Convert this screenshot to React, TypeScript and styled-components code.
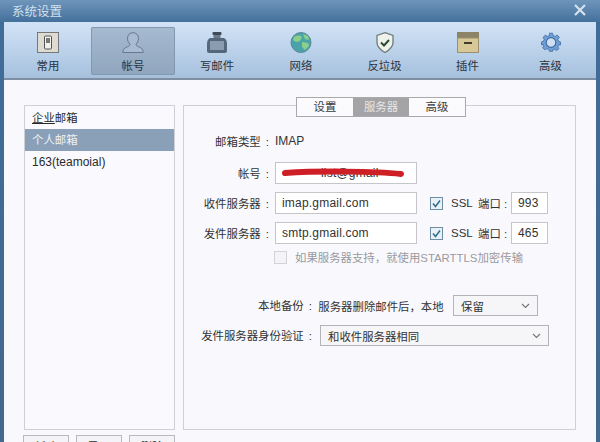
import React from "react";
import styled, { createGlobalStyle } from "styled-components";

const Global = createGlobalStyle`
  html, body { margin: 0; padding: 0; width: 600px; height: 442px; overflow: hidden; background: #4a7199; }
  * { box-sizing: border-box; }
  #root { width: 600px; height: 442px; }
`;

const font = `"Liberation Sans", "Noto Sans CJK SC", sans-serif`;

const Win = styled.div`
  width: 600px; height: 442px; overflow: hidden; display: flex; flex-direction: column;
  font-family: ${font}; color: #2e2e2e; font-size: 11.4px;
  background: linear-gradient(#6a91b8, #406c98 22px, #42698f);
  padding: 0 4px 0 4px;
`;
const TitleBar = styled.div`
  height: 22px; margin: 0 -4px; padding: 0 14px 2px 12px; display: flex; align-items: center; justify-content: space-between;
  background: linear-gradient(#6f95bb, #44709c);
  color: #d3e0ec; font-size: 12.5px; flex: none;
`;
const Close = styled.svg` width: 12px; height: 12px; display: block; `;
const Toolbar = styled.div`
  height: 58px; flex: none; display: flex; align-items: flex-start; padding: 5px 0 0 0;
  background: linear-gradient(#d2e3f6 0%, #bed4ec 45%, #a6c0dc 100%);
  border-bottom: 2px solid #7f8fa3;
`;
const Tool = styled.div<{ $w: number; $on?: boolean }>`
  width: ${p => p.$w}px; height: 48px; flex: none; display: flex; flex-direction: column; align-items: center;
  padding-top: 5px; gap: 6px; font-size: 11.4px; line-height: 14px; color: #2b3440; border-radius: 2px;
  background: ${p => (p.$on ? "linear-gradient(#a6bad0, #90a6be)" : "transparent")};
  box-shadow: ${p => (p.$on ? "inset 0 0 0 1px #8499b0" : "none")};
  svg { width: 22px; height: 21px; display: block; flex: none; }
`;
const Spacer = styled.div<{ $w: number }>` width: ${p => p.$w}px; flex: none; `;
const Body = styled.div`
  flex: 1; background: #f9f9fd; display: flex; gap: 8px; padding: 25px 20px 0 20px; min-height: 0;
`;
const Left = styled.div` width: 151px; flex: none; display: flex; flex-direction: column; gap: 5px; `;
const List = styled.div`
  height: 325px; flex: none; border: 1px solid #cfd0d6; padding-top: 1px; background: #fafafe;
`;
const Item = styled.div<{ $on?: boolean }>`
  height: 22px; line-height: 22px; padding-left: 7px; font-size: 11.4px;
  background: ${p => (p.$on ? "#8aa0b8" : "transparent")};
  color: ${p => (p.$on ? "#eef2f6" : "#2a2a2a")};
`;
const Latin = styled.span` font-size: 12px; `;
const Under = styled.span` text-decoration: underline; `;
const Buttons = styled.div` display: flex; gap: 7px; margin-left: -1px; `;
const Btn = styled.div`
  width: 47px; height: 24px; border: 1px solid #b9b9bd; background: #f4f4f6; text-align: center; line-height: 22px; font-size: 11.4px;
`;
const Panel = styled.div`
  width: 393px; height: 325px; flex: none; border: 1px solid #cfd0d6; background: #f9f9fd;
  display: flex; flex-direction: column;
`;
const Tabs = styled.div`
  display: flex; margin: -9px 0 0 112px; height: 20px; flex: none; width: 170px;
  border: 1px solid #a9a9ad; background: #fbfbfd;
`;
const Tab = styled.div<{ $on?: boolean }>`
  flex: 1; text-align: center; line-height: 18px; font-size: 11.4px;
  background: ${p => (p.$on ? "#a4a4a6" : "transparent")};
  color: ${p => (p.$on ? "#e6e6e8" : "#3a3a3a")};
`;
const Form = styled.div` display: flex; flex-direction: column; flex: 1; `;
const Row = styled.div<{ $h: number; $mt: number }>`
  height: ${p => p.$h}px; margin-top: ${p => p.$mt}px; display: flex; align-items: center; flex: none;
`;
const Label = styled.div<{ $w?: number }>`
  width: ${p => p.$w ?? 85}px; margin-right: ${p => (p.$w ? 0 : 6)}px; padding-bottom: 1px; flex: none;
  text-align: right; font-size: 11.4px; word-spacing: 2px; white-space: nowrap; color: #333;
`;
const Value = styled.div<{ $w?: number }>`
  width: ${p => (p.$w ? `${p.$w}px` : "auto")}; flex: none; font-size: 11.4px; color: #333; white-space: nowrap;
`;
const Imap = styled(Value)` font-size: 12px; `;
const Field = styled.div<{ $w: number; $pl?: number }>`
  position: relative;
  width: ${p => p.$w}px; height: 22px; flex: none; border: 1px solid #c6c6ca; background: #fff;
  padding-left: ${p => p.$pl ?? 6}px; line-height: 20px; font-size: 12px; color: #333; letter-spacing: 0.2px; white-space: nowrap;
`;
const Scribble = styled.svg`
  position: absolute; left: 6px; top: 4px; width: 122px; height: 12px;
`;
const Check = styled.svg<{ $ml: number }>`
  width: 13px; height: 13px; flex: none; display: block; margin-left: ${p => p.$ml}px;
`;
const Ssl = styled.div` margin-left: 8px; width: 27px; font-size: 11.5px; color: #333; `;
const Port = styled.div` width: 33px; font-size: 11.4px; color: #333; white-space: nowrap; `;
const Muted = styled.div` margin-left: 8px; font-size: 11.4px; color: #9a9aa0; white-space: nowrap; `;
const Select = styled.div<{ $w: number; $ml: number }>`
  width: ${p => p.$w}px; height: 21px; margin-left: ${p => p.$ml}px; flex: none;
  border: 1px solid #b4b4b8; background: #f6f6f8; display: flex; align-items: center; justify-content: space-between;
  padding: 0 7px 0 7px; font-size: 11.4px; color: #333;
  svg { width: 9px; height: 6px; display: block; flex: none; }
`;

const Chevron = () => (
  <svg viewBox="0 0 9 6"><path d="M1 1l3.5 3.5L8 1" fill="none" stroke="#777" strokeWidth="1.2" /></svg>
);
const CheckBox = ({ ml, on = true }: { ml: number; on?: boolean }) => (
  <Check $ml={ml} viewBox="0 0 13 13">
    <rect x=".5" y=".5" width="12" height="12" fill={on ? "#e8f1f6" : "#f4f4f6"} stroke={on ? "#6f8ea3" : "#d4d4d8"} />
    {on && <path d="M3 6.5l2.5 3L10 3.5" fill="none" stroke="#2f6f8f" strokeWidth="1.5" />}
  </Check>
);

const IconGeneral = () => (
  <svg viewBox="0 0 22 21">
    <rect x=".5" y=".5" width="21" height="20" fill="#dedcd2" stroke="#77777a" />
    <rect x="7.5" y="4" width="7" height="13" rx="1" fill="#f0efe8" stroke="#555" />
    <rect x="9" y="6" width="4" height="5" fill="#777" />
  </svg>
);
const IconUser = () => (
  <svg viewBox="0 0 22 21">
    <path d="M.8 20.500c0-3.500 2-4.800 4.700-5.800 1.500-.6 2.500-1.200 2.500-2.500-1.500-1.500-2.500-3.500-2.500-6C5.500 3 7.800.7 11 .7s5.500 2.300 5.500 5.500c0 2.500-1 4.500-2.500 6 0 1.300 1 1.900 2.500 2.500 2.700 1 4.700 2.300 4.700 5.800z" fill="#a9bbd0" stroke="#64788f" />
  </svg>
);
const IconStamp = () => (
  <svg viewBox="0 0 22 21">
    <rect x="6.500" y="0" width="9" height="3" rx="1" fill="#3e4a57" />
    <rect x="7.500" y="3" width="7" height="4" fill="#6e7a88" />
    <path d="M4 6h14c2 1 3 3 3 6v7a2 2 0 0 1-2 2H3a2 2 0 0 1-2-2v-7c0-3 1-5 3-6z" fill="#55677a" />
    <path d="M4 9h14v9H4z" fill="#8a9cb0" />
  </svg>
);
const IconGlobe = () => (
  <svg viewBox="0 0 22 21">
    <circle cx="11" cy="10.500" r="10" fill="#4aa3a8" stroke="#5a8a9a" />
    <path d="M4 5c3-2 6-2 8 0l-2 4-4 1-3-2zM12 10l6 1 1 3-4 4-3-3zM13 2l5 2 1 4-4-1z" fill="#8ccf8c" />
  </svg>
);
const IconShield = () => (
  <svg viewBox="0 0 22 21">
    <path d="M11 .7l8 2.800v7c0 5-4.500 8-8 10-3.500-2-8-5-8-10v-7z" fill="#eef1ec" stroke="#6f7b78" strokeWidth="1.3" />
    <path d="M7 10.500l3 3 5-5.500" fill="none" stroke="#2c4a32" strokeWidth="2" />
  </svg>
);
const IconBox = () => (
  <svg viewBox="0 0 22 21">
    <rect x="0" y="0" width="22" height="6" fill="#8d8468" />
    <rect x=".5" y="6" width="21" height="14.500" fill="#d8c898" stroke="#9a8f70" />
    <rect x="7" y="10" width="8" height="2" fill="#3f3a2c" />
  </svg>
);
const IconGear = () => (
  <svg viewBox="0 0 24 24">
    <path d="M10 1h4l.7 3 2.500 1 2.600-1.600 2.800 2.800L20.600 8.800l1 2.500 2.400.7v4l-2.400-.2-1 2.500 1.500 2.200-2.800 2.400-2.600-1.500-2.500 1L14 24h-4l-.7-2.500-2.500-1-2.600 1.500-2.800-2.400 1.500-2.200-1-2.500L0 16v-4l2.400-.7 1-2.500L2 6.200 4.800 3.400 7.400 5l2.500-1z" transform="translate(1.200 .5) scale(.9)" fill="#6f9fd8" stroke="#41699c" />
    <circle cx="12" cy="12" r="5.500" fill="#cfe0f2" stroke="#41699c" strokeWidth="1.300" />
  </svg>
);

export default function App() {
  return (
    <Win>
      <Global />
      <TitleBar>
        <span>系统设置</span>
        <Close viewBox="0 0 12 12"><path d="M1 1l10 10M11 1L1 11" stroke="#d5e2ee" strokeWidth="2.200" /></Close>
      </TitleBar>
      <Toolbar>
        <Spacer $w={5} />
        <Tool $w={78}><IconGeneral />常用</Tool>
        <Spacer $w={4} />
        <Tool $w={84} $on><IconUser />帐号</Tool>
        <Tool $w={84}><IconStamp />写邮件</Tool>
        <Tool $w={84}><IconGlobe />网络</Tool>
        <Tool $w={83}><IconShield />反垃圾</Tool>
        <Tool $w={83}><IconBox />插件</Tool>
        <Tool $w={83}><IconGear />高级</Tool>
      </Toolbar>
      <Body>
        <Left>
          <List>
            <Item><Under>企业</Under>邮箱</Item>
            <Item $on>个人邮箱</Item>
            <Item><Latin>163(teamoial)</Latin></Item>
          </List>
          <Buttons>
            <Btn>新建</Btn>
            <Btn>导入</Btn>
            <Btn>删除</Btn>
          </Buttons>
        </Left>
        <Panel>
          <Tabs>
            <Tab>设置</Tab>
            <Tab $on>服务器</Tab>
            <Tab>高级</Tab>
          </Tabs>
          <Form>
            <Row $h={20} $mt={14}>
              <Label>邮箱类型 :</Label>
              <Imap>IMAP</Imap>
            </Row>
            <Row $h={22} $mt={11}>
              <Label>帐号 :</Label>
              <Field $w={142} $pl={45}>
                list@gmail
                <Scribble viewBox="0 0 122 12">
                  <path d="M3 6c30-2 90-2 116 1" stroke="#cf1f26" strokeWidth="6" fill="none" strokeLinecap="round" />
                </Scribble>
              </Field>
            </Row>
            <Row $h={22} $mt={8}>
              <Label>收件服务器 :</Label>
              <Field $w={142}>imap.gmail.com</Field>
              <CheckBox ml={13} />
              <Ssl>SSL</Ssl>
              <Port>端口 :</Port>
              <Field $w={37}>993</Field>
            </Row>
            <Row $h={22} $mt={8}>
              <Label>发件服务器 :</Label>
              <Field $w={142}>smtp.gmail.com</Field>
              <CheckBox ml={13} />
              <Ssl>SSL</Ssl>
              <Port>端口 :</Port>
              <Field $w={37}>465</Field>
            </Row>
            <Row $h={16} $mt={5}>
              <CheckBox ml={90} on={false} />
              <Muted>如果服务器支持，就使用STARTTLS加密传输</Muted>
            </Row>
            <Row $h={21} $mt={30}>
              <Label $w={128}>本地备份 :</Label>
              <Value $w={132}>&nbsp;&nbsp;服务器删除邮件后，本地</Value>
              <Select $w={85} $ml={9}>保留<Chevron /></Select>
            </Row>
            <Row $h={21} $mt={9}>
              <Label $w={128}>发件服务器身份验证 :</Label>
              <Select $w={229} $ml={8}>和收件服务器相同<Chevron /></Select>
            </Row>
          </Form>
        </Panel>
      </Body>
    </Win>
  );
}
